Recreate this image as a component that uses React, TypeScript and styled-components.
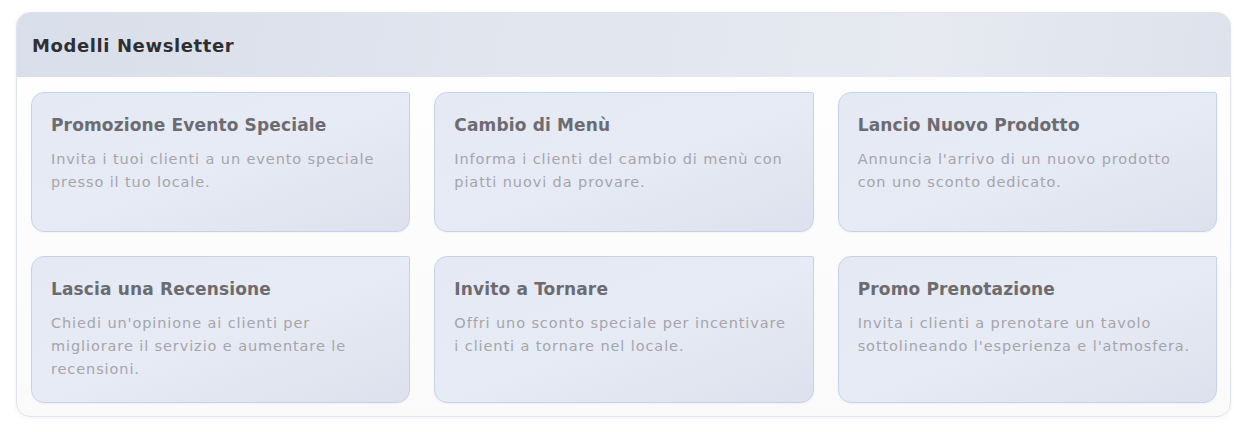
import React, { FC } from "react"
import styled, { createGlobalStyle } from "styled-components"

const GlobalStyle = createGlobalStyle`
  html, body {
    margin: 0;
    padding: 0;
    background: #ffffff;
  }
  body {
    font-family: "DejaVu Sans", "Noto Sans", sans-serif;
  }
`

interface Template {
  title: string
  description: string
}

const TEMPLATES: Template[] = [
  {
    title: "Promozione Evento Speciale",
    description: "Invita i tuoi clienti a un evento speciale presso il tuo locale.",
  },
  {
    title: "Cambio di Menù",
    description: "Informa i clienti del cambio di menù con piatti nuovi da provare.",
  },
  {
    title: "Lancio Nuovo Prodotto",
    description: "Annuncia l'arrivo di un nuovo prodotto con\u00a0uno sconto dedicato.",
  },
  {
    title: "Lascia una Recensione",
    description:
      "Chiedi un'opinione ai clienti per migliorare il servizio e aumentare le recensioni.",
  },
  {
    title: "Invito a Tornare",
    description: "Offri uno sconto speciale per incentivare i clienti a tornare nel locale.",
  },
  {
    title: "Promo Prenotazione",
    description:
      "Invita i clienti a prenotare un tavolo sottolineando l'esperienza e l'atmosfera.",
  },
]

const Page = styled.div`
  padding: 12px 15px 15px 16px;
`

const Panel = styled.section`
  border: 1px solid #dfe3eb;
  border-radius: 14px;
  overflow: hidden;
  background: linear-gradient(180deg, #ffffff 0%, #fafafa 100%);
  box-shadow: 0 1px 4px rgba(30, 40, 70, 0.06);
`

const PanelHeader = styled.header`
  height: 64px;
  display: flex;
  align-items: center;
  padding: 0 15px;
  background: linear-gradient(100deg, #d9dfea 0%, #e1e6ef 45%, #e7eaf1 75%, #dde2ec 100%);
`

const PanelTitle = styled.h2`
  margin: 0;
  font-size: 18px;
  font-weight: 700;
  color: #2f2f33;
  letter-spacing: 0.6px;
`

const Grid = styled.div`
  display: grid;
  grid-template-columns: repeat(3, 1fr);
  gap: 24px;
  padding: 15px 13px 13px 14px;
`

const Card = styled.article`
  min-height: 140px;
  box-sizing: border-box;
  padding: 19px 19px 21px;
  border: 1px solid #c5d3ea;
  border-radius: 13px 2px 13px 13px;
  background: linear-gradient(160deg, #e5e9f4 0%, #e7ebf5 50%, #dce1ed 100%);
  box-shadow: 0 1px 2px rgba(60, 80, 120, 0.05);
`

const CardTitle = styled.h3`
  margin: 0 0 10px;
  font-size: 17px;
  line-height: 26px;
  font-weight: 700;
  letter-spacing: 0.15px;
  color: #6c6c70;
`

const CardText = styled.p`
  margin: 0;
  font-size: 14.5px;
  line-height: 23px;
  letter-spacing: 0.9px;
  color: #a5a5aa;
`

const TemplateCard: FC<Template> = ({ title, description }) => (
  <Card>
    <CardTitle>{title}</CardTitle>
    <CardText>{description}</CardText>
  </Card>
)

const App: FC = () => (
  <>
    <GlobalStyle />
    <Page>
      <Panel>
        <PanelHeader>
          <PanelTitle>Modelli Newsletter</PanelTitle>
        </PanelHeader>
        <Grid>
          {TEMPLATES.map(t => (
            <TemplateCard key={t.title} {...t} />
          ))}
        </Grid>
      </Panel>
    </Page>
  </>
)

export default App
